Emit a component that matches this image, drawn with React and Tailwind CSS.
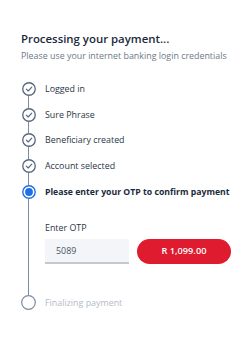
import React from 'react'

const Check = () => (
  <svg viewBox="0 0 14 14" className="w-[14px] h-[14px]" fill="none">
    <circle cx="7" cy="7" r="6.25" stroke="#55677d" strokeWidth="1.3" />
    <path d="M4.3 7.2 L6.2 9 L9.8 5.2" stroke="#55677d" strokeWidth="1.1" strokeLinecap="round" strokeLinejoin="round" />
  </svg>
)

const Active = () => (
  <svg viewBox="0 0 14 14" className="w-[14px] h-[14px]" fill="none">
    <circle cx="7" cy="7" r="6.2" stroke="#1f6fe5" strokeWidth="1.4" />
    <circle cx="7" cy="7" r="3.9" fill="#1f6fe5" />
  </svg>
)

const Empty = () => (
  <svg viewBox="0 0 15 15" className="w-[15px] h-[15px]" fill="none">
    <circle cx="7.5" cy="7.5" r="6.8" stroke="#7b8ca0" strokeWidth="1.2" />
  </svg>
)

const done = ['Logged in', 'Sure Phrase', 'Beneficiary created', 'Account selected']

function Step({ icon, children, line = true }) {
  return (
    <div className="flex">
      <div className="flex flex-col items-center w-[15px] shrink-0">
        <div className="shrink-0 flex">{icon}</div>
        {line && <div className="w-[1.5px] flex-1 bg-[#7b8ca0]" />}
      </div>
      <div className="ml-[9px] flex-1 min-w-0">{children}</div>
    </div>
  )
}

export default function App() {
  return (
    <div className="w-[250px] h-[351px] bg-white pl-[21px] pt-[30px]" style={{ fontFamily: '"Open Sans", sans-serif' }}>
      <h1 className="text-[11.4px] leading-[17px] font-semibold text-[#1b2a3b]">Processing your payment...</h1>
      <p className="text-[8.9px] leading-[14px] mt-[2px] text-[#6d7886]">Please use your internet banking login credentials</p>

      <div className="mt-[19px]">
        {done.map((d) => (
          <Step key={d} icon={<Check />}>
            <div className="text-[8.9px] leading-[14px] text-[#2a3646] pb-[11.7px]">{d}</div>
          </Step>
        ))}
        <Step icon={<Active />}>
          <div className="text-[8.7px] leading-[14px] font-bold text-[#1b2a3b] whitespace-nowrap">Please enter your OTP to confirm payment</div>
          <div className="text-[8.9px] leading-[14px] text-[#2a3646] mt-[22px]">Enter OTP</div>
          <div className="flex items-center gap-[8px] mt-[4px] pb-[31px]">
            <div className="w-[84px] h-[25px] bg-[#f3f5f8] border-b-2 border-[#c3c9d1] flex items-center pl-[11px] text-[8.9px] text-[#4a5564]">5089</div>
            <button className="w-[94px] h-[25px] rounded-full bg-[#de1b2f] text-white text-[9.2px] font-semibold flex items-center justify-center">R 1,099.00</button>
          </div>
        </Step>
        <Step icon={<Empty />} line={false}>
          <div className="text-[8.9px] leading-[15px] text-[#b3bbc6]">Finalizing payment</div>
        </Step>
      </div>
    </div>
  )
}
